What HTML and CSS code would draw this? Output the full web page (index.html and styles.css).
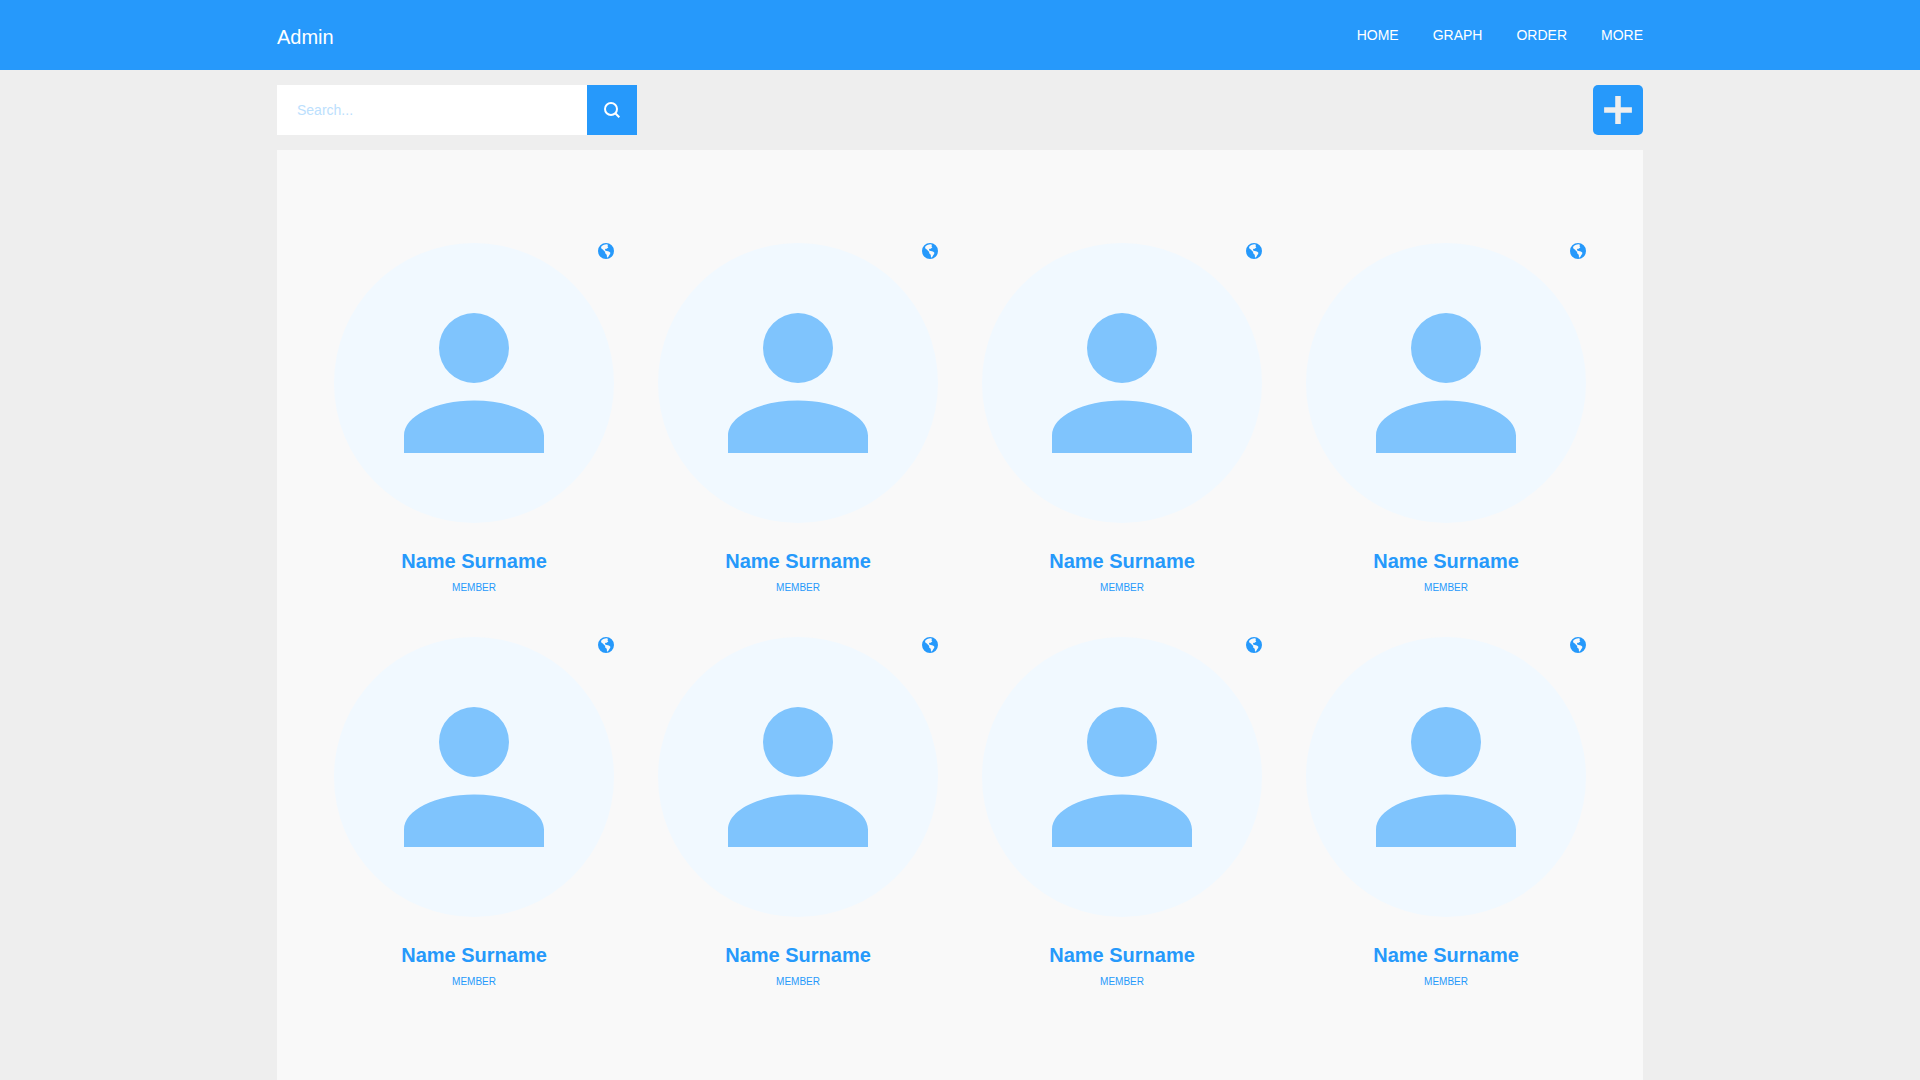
FILE: index.html
```html
<!DOCTYPE html>
<html lang="en">
<head>
<meta charset="utf-8">
<meta name="viewport" content="width=device-width, initial-scale=1">
<title>Admin</title>
<link rel="stylesheet" href="styles.css">
</head>
<body>
<svg class="sprite" aria-hidden="true">
  <symbol id="account" viewBox="0 0 24 24">
    <path d="M12 4a4 4 0 1 1 0 8 4 4 0 0 1 0-8zM12 14c4.42 0 8 1.79 8 4v2H4v-2c0-2.21 3.58-4 8-4z"/>
  </symbol>
  <symbol id="globe" viewBox="0 0 16 16">
    <path fill-rule="evenodd" d="M8 0a8 8 0 1 1 0 16A8 8 0 0 1 8 0zM9 1.200C6.500 1.100 4.300 2.100 3.200 3.800C2.900 5 3.300 5.900 4.300 6.300C5.300 6.600 5.700 7.700 6.700 8.500L7.300 8.900C6.700 9.800 7.400 10.800 8.500 11.600C9.100 12.400 8.800 13.600 9.100 14.700C10.200 14.500 10.700 13.200 11.300 12C12.100 11.400 12.500 10.500 12.200 9.500C11.600 8.500 10.300 8 8.900 7.900L7.700 7.700C7 7.500 7.200 6.800 7 6.400C7 5.700 7.900 5.600 8.500 5.900C9.100 5.700 9.300 5.100 10.200 4.600C10.500 4 9.600 3.500 9.300 3C10.100 2.600 10.300 1.600 9 1.200z"/>
  </symbol>
</svg>

<header class="header">
  <div class="container header-inner">
    <a class="brand" href="#">Admin</a>
    <nav class="nav" aria-label="Main">
      <a href="#">HOME</a>
      <a href="#">GRAPH</a>
      <a href="#">ORDER</a>
      <a href="#">MORE</a>
    </nav>
  </div>
</header>

<main class="container main">
  <div class="toolbar">
    <form class="search" role="search">
      <input class="search-input" type="search" placeholder="Search..." aria-label="Search">
      <button class="search-button" type="submit" aria-label="Search">
        <svg class="search-icon" viewBox="0 0 16 16"><circle cx="7" cy="7" r="6"/><path d="M11.300 11.300L15.300 15.300"/></svg>
      </button>
    </form>
    <button class="add-button" type="button" aria-label="Add member">
      <svg class="add-icon" viewBox="0 0 18 18"><path d="M8 4h2v4h4v2h-4v4H8v-4H4V8h4z"/></svg>
    </button>
  </div>

  <section class="panel" aria-label="Members">
    <ul class="members">
      <li class="member">
        <div class="avatar"><svg class="person"><use href="#account"/></svg></div>
        <svg class="globe"><use href="#globe"/></svg>
        <h2 class="name">Name Surname</h2>
        <p class="role">MEMBER</p>
      </li>
      <li class="member">
        <div class="avatar"><svg class="person"><use href="#account"/></svg></div>
        <svg class="globe"><use href="#globe"/></svg>
        <h2 class="name">Name Surname</h2>
        <p class="role">MEMBER</p>
      </li>
      <li class="member">
        <div class="avatar"><svg class="person"><use href="#account"/></svg></div>
        <svg class="globe"><use href="#globe"/></svg>
        <h2 class="name">Name Surname</h2>
        <p class="role">MEMBER</p>
      </li>
      <li class="member">
        <div class="avatar"><svg class="person"><use href="#account"/></svg></div>
        <svg class="globe"><use href="#globe"/></svg>
        <h2 class="name">Name Surname</h2>
        <p class="role">MEMBER</p>
      </li>
      <li class="member">
        <div class="avatar"><svg class="person"><use href="#account"/></svg></div>
        <svg class="globe"><use href="#globe"/></svg>
        <h2 class="name">Name Surname</h2>
        <p class="role">MEMBER</p>
      </li>
      <li class="member">
        <div class="avatar"><svg class="person"><use href="#account"/></svg></div>
        <svg class="globe"><use href="#globe"/></svg>
        <h2 class="name">Name Surname</h2>
        <p class="role">MEMBER</p>
      </li>
      <li class="member">
        <div class="avatar"><svg class="person"><use href="#account"/></svg></div>
        <svg class="globe"><use href="#globe"/></svg>
        <h2 class="name">Name Surname</h2>
        <p class="role">MEMBER</p>
      </li>
      <li class="member">
        <div class="avatar"><svg class="person"><use href="#account"/></svg></div>
        <svg class="globe"><use href="#globe"/></svg>
        <h2 class="name">Name Surname</h2>
        <p class="role">MEMBER</p>
      </li>
    </ul>
  </section>
</main>
</body>
</html>
```

FILE: styles.css
```css
* {
  box-sizing: border-box;
}

body {
  display: flex;
  flex-direction: column;
  min-height: 100vh;
  margin: 0;
  background: #eeeeee;
  color: #2699fb;
  font-family: "Liberation Sans", Arial, sans-serif;
  font-size: 14px;
}

a {
  color: inherit;
  text-decoration: none;
}

button {
  display: flex;
  align-items: center;
  justify-content: center;
  flex: none;
  width: 50px;
  height: 50px;
  padding: 0;
  border: 0;
  background: #2699fb;
  cursor: pointer;
}

.sprite {
  display: none;
}

.container {
  width: 100%;
  max-width: 1366px;
  margin: 0 auto;
}

.header {
  background: #2699fb;
  color: #ffffff;
}

.header-inner {
  display: flex;
  align-items: center;
  justify-content: space-between;
  min-height: 70px;
}

.brand {
  padding-top: 4px;
  font-size: 20px;
  line-height: 24px;
}

.nav {
  display: flex;
  gap: 34px;
  line-height: 16px;
}

.main {
  display: flex;
  flex: 1;
  flex-direction: column;
}

.toolbar {
  display: flex;
  justify-content: space-between;
  gap: 16px;
  padding: 15px 0;
}

.search {
  display: flex;
  flex: 0 1 360px;
}

.search-input {
  flex: 1;
  min-width: 0;
  height: 50px;
  padding: 0 20px;
  border: 0;
  border-radius: 0;
  background: #ffffff;
  color: #2699fb;
  font: inherit;
  appearance: none;
}

.search-input::placeholder {
  color: #bce0fd;
}

.search-icon {
  width: 16px;
  height: 16px;
  fill: none;
  stroke: #ffffff;
  stroke-width: 2;
}

.add-button {
  border-radius: 5px;
}

.add-icon {
  width: 50px;
  height: 50px;
  fill: #eeeeee;
}

.panel {
  flex: 1;
  padding: 93px 57px;
  background: #f9f9f9;
}

.members {
  display: grid;
  grid-template-columns: repeat(4, 1fr);
  gap: 42px 44px;
  margin: 0;
  padding: 0;
  list-style: none;
}

.member {
  position: relative;
  text-align: center;
}

.avatar {
  display: flex;
  align-items: center;
  justify-content: center;
  aspect-ratio: 1;
  margin-bottom: 26px;
  border-radius: 50%;
  background: #f1f9ff;
}

.person {
  width: 75%;
  height: 75%;
  fill: #7fc4fd;
}

.globe {
  position: absolute;
  top: 0;
  right: 0;
  width: 16px;
  height: 16px;
  fill: #2699fb;
}

.name {
  margin: 0 0 8px;
  font-size: 20px;
  line-height: 24px;
}

.role {
  margin: 0;
  font-size: 10px;
  line-height: 14px;
}

@media (max-width: 1100px) {
  .members {
    grid-template-columns: repeat(2, 1fr);
  }

  .header-inner,
  .toolbar {
    padding-left: 16px;
    padding-right: 16px;
  }
}
```
